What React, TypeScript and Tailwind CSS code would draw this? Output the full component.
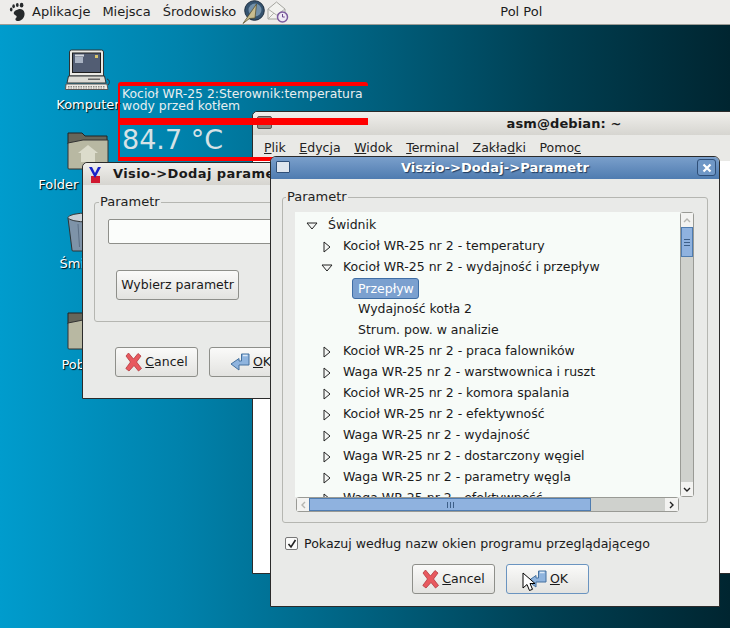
import React from "react";

const FONT = { fontFamily: '"DejaVu Sans", sans-serif' };

const TREE = [
  { label: "Kocioł WR-25 nr 2 - temperatury", open: false, lvl: 1 },
  { label: "Kocioł WR-25 nr 2 - wydajność i przepływ", open: true, lvl: 1 },
  { label: "Przepływ", lvl: 2, selected: true },
  { label: "Wydajność kotła 2", lvl: 2 },
  { label: "Strum. pow. w analizie", lvl: 2 },
  { label: "Kocioł WR-25 nr 2 - praca falowników", open: false, lvl: 1 },
  { label: "Waga WR-25 nr 2 - warstwownica i ruszt", open: false, lvl: 1 },
  { label: "Kocioł WR-25 nr 2 - komora spalania", open: false, lvl: 1 },
  { label: "Kocioł WR-25 nr 2 - efektywność", open: false, lvl: 1 },
  { label: "Waga WR-25 nr 2 - wydajność", open: false, lvl: 1 },
  { label: "Waga WR-25 nr 2 - dostarczony węgiel", open: false, lvl: 1 },
  { label: "Waga WR-25 nr 2 - parametry węgla", open: false, lvl: 1 },
  { label: "Waga WR-25 nr 2 - efektywność", open: false, lvl: 1 },
];

function Foot() {
  return (
    <svg width="17" height="20" viewBox="0 0 17 20">
      <path d="M9 7.500c3-1.200 6 .5 6.500 3.500.5 3.500-2 7.500-6 8-2.500.3-4-1.500-2.500-3 1.200-1.200 1-2-1-3-2.500-1.500-1-4.500 3-5.500z" fill="#26292b" />
      <ellipse cx="2.200" cy="7.500" rx="1.300" ry="1.900" fill="#26292b" />
      <ellipse cx="4.600" cy="4.300" rx="1.300" ry="2" fill="#26292b" />
      <ellipse cx="8.300" cy="3" rx="1.400" ry="2" fill="#26292b" />
      <ellipse cx="12.600" cy="3.200" rx="1.800" ry="2.400" fill="#26292b" />
    </svg>
  );
}

function Compass() {
  return (
    <svg width="23" height="24" viewBox="0 0 23 24">
      <circle cx="12.500" cy="10.500" r="9.800" fill="#35536f" stroke="#1f2f40" />
      <circle cx="13" cy="10" r="6.500" fill="#88a5bd" opacity=".75" />
      <path d="M1 23.500 14.500 4l-1.500 14-5.500.5z" fill="#c9bd8f" stroke="#4f4727" strokeWidth=".7" />
    </svg>
  );
}

function MailClock() {
  return (
    <svg width="22" height="23" viewBox="0 0 22 23">
      <path d="M1 8 9.500 1 18 8v10H1z" fill="#f2f2ef" stroke="#a5a5a0" />
      <path d="M1 8l8.500 6L18 8M1 18l6-6" fill="none" stroke="#b0b0ab" />
      <circle cx="15.500" cy="16" r="5" fill="#efe9f4" stroke="#7b5a9e" strokeWidth="1.500" />
      <path d="M15.500 13v3h2.200" stroke="#6b4a8e" fill="none" />
    </svg>
  );
}

function ComputerIcon() {
  return (
    <svg width="46" height="42" viewBox="0 0 46 42">
      <path d="M6.500 1h30a2 2 0 0 1 2 2v24h-34V3a2 2 0 0 1 2-2z" fill="#ebeae5" stroke="#2e3436" />
      <rect x="7.500" y="4" width="28" height="19.500" fill="#525d73" stroke="#1c1c1c" />
      <rect x="10" y="5.500" width="9" height="2" fill="#d6dae0" />
      <rect x="10" y="8" width="8" height="6" fill="#a9b3c3" />
      <rect x="30" y="6" width="3" height="3" fill="#d8c56a" />
      <path d="M3.500 27h36l1.500 7H2z" fill="#dcdbd4" stroke="#2e3436" />
      <rect x="23" y="29.500" width="12" height="1.500" fill="#666" />
      <path d="M1 35h41l1 5.500H.5z" fill="#ecebe5" stroke="#555" />
      <path d="M3 37.500h37M3 39h37" stroke="#8a8a86" strokeDasharray="1.500 1" />
      <path d="M42 30c3 1 3 4 1 6" fill="none" stroke="#333" />
    </svg>
  );
}

function FolderIcon({ home }: { home?: boolean }) {
  return (
    <svg width="42" height="38" viewBox="0 0 42 38">
      <path d="M1 1h14l3 3h22v8H1z" fill="#66665a" stroke="#222" />
      <path d="M1 11 16 8h25v28a1 1 0 0 1-1 1H2a1 1 0 0 1-1-1z" fill="#b8b8a2" stroke="#333" />
      {home && <path d="M21 13l-10 8h3v9h14v-9h3z" fill="#dcdccb" />}
    </svg>
  );
}

function TrashIcon() {
  return (
    <svg width="44" height="40" viewBox="0 0 44 40">
      <path d="M2 6h40l-4 32a1 1 0 0 1-1 1H7a1 1 0 0 1-1-1z" fill="#7e93a8" stroke="#2e3436" />
      <ellipse cx="22" cy="5.500" rx="20" ry="4.500" fill="#c9d0d6" stroke="#2e3436" />
      <path d="M12 12l1.500 23M22 12v23M32 12l-1.500 23" stroke="#5c7086" />
    </svg>
  );
}

function CancelIcon() {
  return (
    <svg width="17" height="20" viewBox="0 0 17 20">
      <path d="M3.500 1 8.500 7 13 1.500l3 2.500-4.500 6 5 6.500-3 2.500-4.500-5.500L4 19 .8 16.500 5.500 10 1 4z" fill="#e8595f" stroke="#b23a3f" strokeWidth=".8" strokeLinejoin="round" />
    </svg>
  );
}

function OkIcon() {
  return (
    <svg width="20" height="19" viewBox="0 0 20 19">
      <path d="M11.500 1H19v11H9v5L1 11l8-5.500V8h2.500z" fill="#8fb4de" stroke="#44719f" strokeLinejoin="round" />
      <path d="M13 2.500h4.500" stroke="#dbe8f6" strokeWidth="1.500" />
    </svg>
  );
}

function Btn({ children, focus }: { children: React.ReactNode; focus?: boolean }) {
  return (
    <div className={`flex h-[30px] w-[83px] items-center justify-center gap-[3px] rounded-[3px] border bg-gradient-to-b from-[#fafaf9] to-[#e3e3e0] text-[12.5px] text-[#1a1a1a] ${focus ? "border-[#6a94c0]" : "border-[#8e8f8a]"}`}>
      {children}
    </div>
  );
}

function CancelBtn() {
  return (
    <Btn>
      <CancelIcon />
      <span><span className="underline">C</span>ancel</span>
    </Btn>
  );
}

function OkBtn({ focus }: { focus?: boolean }) {
  return (
    <Btn focus={focus}>
      <OkIcon />
      <span><span className="underline">O</span>K</span>
    </Btn>
  );
}

function Desk({ label, children, cls, gap }: { label: string; children: React.ReactNode; cls: string; gap: string }) {
  return (
    <div className={`absolute flex w-[100px] flex-col items-center text-[13px] text-white ${cls}`}>
      {children}
      <span className={`whitespace-nowrap [text-shadow:1px_1px_1px_#000] ${gap}`}>{label}</span>
    </div>
  );
}

function Arrow({ open }: { open?: boolean }) {
  return open ? (
    <svg width="12" height="8" viewBox="0 0 12 8"><path d="M1 1h10L6 7z" fill="#f4f6f4" stroke="#222" /></svg>
  ) : (
    <svg width="8" height="12" viewBox="0 0 8 12"><path d="M1 1v10l6-5z" fill="#f4f6f4" stroke="#222" /></svg>
  );
}

export default function App() {
  return (
    <div style={FONT} className="relative h-[628px] w-[730px] overflow-hidden bg-[linear-gradient(90deg,#009ccd_0px,#0082ac_180px,#00607e_370px,#003f52_550px,#002530_730px)]">
      {/* top panel */}
      <div className="flex h-[25px] items-center border-b border-[#9c9c96] bg-[#edecea] text-[13px] text-[#1c1c1c]">
        <div className="ml-[9px] flex w-[23px] items-center"><Foot /></div>
        <span>Aplikacje</span>
        <span className="ml-[12px]">Miejsca</span>
        <span className="ml-[12px]">Środowisko</span>
        <div className="ml-[6px]"><Compass /></div>
        <div className="ml-[2px]"><MailClock /></div>
        <span className="ml-[211px]">Pol Pol</span>
      </div>

      {/* desktop icons */}
      <Desk label="Komputer" cls="left-[38px] top-[49px]" gap="mt-[4px]"><ComputerIcon /></Desk>
      <Desk label="Folder domowy" cls="left-[38px] top-[132px]" gap="mt-[5px]"><FolderIcon home /></Desk>
      <Desk label="Śmietnik" cls="left-[38px] top-[212px]" gap="mt-[2px]"><TrashIcon /></Desk>
      <Desk label="Pobrane" cls="left-[38px] top-[312px]" gap="mt-[5px]"><FolderIcon /></Desk>

      {/* terminal window */}
      <div className="absolute left-[252px] top-[111px] h-[463px] w-[624px] rounded-t-[5px] border border-[#2b2b2b] bg-white">
        <div className="flex h-[23px] items-center justify-center rounded-t-[5px] bg-gradient-to-b from-[#f0efec] to-[#d6d5d0] text-[13px] font-bold tracking-[0.1px] text-[#1a1a1a]">
          asm@debian: ~
        </div>
        <div className="flex h-[26px] items-center gap-[13.6px] bg-[#e9e9e6] pl-[11px] text-[12.5px] text-[#222]">
          <span><span className="underline">P</span>lik</span>
          <span><span className="underline">E</span>dycja</span>
          <span><span className="underline">W</span>idok</span>
          <span><span className="underline">T</span>erminal</span>
          <span>Zakła<span className="underline">d</span>ki</span>
          <span>Pomo<span className="underline">c</span></span>
        </div>
      </div>
      <div className="absolute left-[257px] top-[116px] h-[13px] w-[15px] rounded-[2px] border border-[#555] bg-[#8a8a84]" />

      {/* red widget */}
      <div className="absolute left-[118px] top-[82px] h-[79px] w-[250px] rounded-t-[3px] border-y-4 border-l-2 border-[#ff0000]">
        <div className="h-[32px] px-[2px] pt-[2px] text-[12.4px] leading-[12px] text-[#e8eef0]">
          Kocioł WR-25 2:Sterownik:temperatura
          <br />
          wody przed kotłem
        </div>
        <div className="h-[7px] bg-[#ff0000]" />
        <div className="pl-[2px] text-[27px] leading-[30px] text-[#d6e2e6]">84.7 °C</div>
      </div>

      {/* Visio dialog */}
      <div className="absolute left-[82px] top-[162px] h-[237px] w-[230px] rounded-t-[5px] border border-[#2b2b2b] bg-[#e9eae8]">
        <div className="flex h-[22px] items-center whitespace-nowrap rounded-t-[5px] bg-gradient-to-b from-[#f0efec] to-[#d6d5d0] pl-[5px] text-[13px] font-bold tracking-[0.4px] text-[#1a1a1a]">
          <svg width="16" height="17" viewBox="0 0 16 17" className="mr-[9px]">
            <rect x="3" y="10" width="9" height="7" fill="#d01830" />
            <path d="M1 1l6 11 6-11-3 0-3 6-3-6z" fill="#1a22c8" />
          </svg>
          Visio-&gt;Dodaj parametr
        </div>
        <div className="relative ml-[11px] mt-[17px] h-[120px] w-[230px] rounded-[3px] border border-[#b5b6b1] pl-[13px] pt-[16px]">
          <span className="absolute -top-[9px] left-[4px] bg-[#e9eae8] px-[1px] text-[13px] leading-[16px] text-[#222]">Parametr</span>
          <div className="h-[25px] w-[200px] rounded-[2px] border border-[#8e8f8a] bg-[#fbfdfb]" />
          <div className="ml-[8px] mt-[26px] flex h-[30px] w-[123px] items-center justify-center rounded-[3px] border border-[#8e8f8a] bg-gradient-to-b from-[#fafaf9] to-[#e3e3e0] text-[12.5px] text-[#1a1a1a]">Wybierz parametr</div>
        </div>
        <div className="ml-[32px] mt-[25px] flex gap-[11px]">
          <CancelBtn />
          <OkBtn />
        </div>
      </div>

      {/* parameter dialog */}
      <div className="absolute left-[270px] top-[156px] flex h-[451px] w-[450px] flex-col rounded-t-[6px] border border-[#2b2b2b] bg-[#e9eae8]">
        <div className="relative flex h-[22px] shrink-0 items-center justify-center rounded-t-[5px] bg-gradient-to-b from-[#7a9fcb] to-[#4f7cb0] text-[13px] font-bold tracking-[0.1px] text-white [text-shadow:1px_1px_1px_#1f3a5c]">
          Viszio-&gt;Dodaj-&gt;Parametr
          <div className="absolute left-[5px] top-[4px] h-[12px] w-[14px] rounded-[1px] border border-[#2f4f78] bg-[#dfe6ee]" />
          <div className="absolute right-[3px] top-[2px] flex h-[17px] w-[19px] items-center justify-center rounded-[3px] border border-[#2f4f78] bg-[#6f97c6]">
            <svg width="10" height="10" viewBox="0 0 10 10"><path d="M1.500 1.500l7 7M8.500 1.500l-7 7" stroke="#fff" strokeWidth="2.200" /></svg>
          </div>
        </div>

        <div className="relative mx-[11px] mt-[18px] h-[326px] shrink-0 rounded-[3px] border border-[#b5b6b1] pl-[12px] pt-[14px]">
          <span className="absolute -top-[9px] left-[3px] bg-[#e9eae8] px-[1px] text-[13px] leading-[16px] text-[#222]">Parametr</span>
          <div className="flex h-[285px]">
            <div className="h-[285px] w-[385px] overflow-hidden bg-[#f7fbf8] pt-[3px] text-[12.5px] text-[#1a1a1a]">
              <div className="flex h-[21px] items-center pl-[11px]">
                <Arrow open />
                <span className="ml-[10px]">Świdnik</span>
              </div>
              {TREE.map((n) => (
                <div key={n.label} className="flex h-[21px] items-center whitespace-nowrap">
                  {n.lvl === 1 ? (
                    <>
                      <div className={`flex w-[48px] justify-end ${n.open ? "pr-[10px]" : "pr-[12px]"}`}><Arrow open={n.open} /></div>
                      <span>{n.label}</span>
                    </>
                  ) : n.selected ? (
                    <span className="ml-[57px] rounded-[3px] border border-[#3f6ea5] bg-[#7ba0cf] pl-[5px] pr-[4px] leading-[19px] text-white">{n.label}</span>
                  ) : (
                    <span className="ml-[63px]">{n.label}</span>
                  )}
                </div>
              ))}
            </div>
            {/* vertical scrollbar */}
            <div className="flex w-[14px] flex-col rounded-[3px] border border-[#999a95] bg-[#cfd1cd]">
              <div className="flex h-[14px] items-center justify-center bg-[#f3f3f1]">
                <svg width="8" height="5" viewBox="0 0 8 5"><path d="M1 4l3-3 3 3" fill="none" stroke="#b5b5b0" strokeWidth="1.400" /></svg>
              </div>
              <div className="flex h-[30px] flex-col items-center justify-center gap-[2px] border border-[#4f7cb0] bg-[#8fb2df]">
                <div className="h-px w-[6px] bg-[#3d5f88]" /><div className="h-px w-[6px] bg-[#3d5f88]" /><div className="h-px w-[6px] bg-[#3d5f88]" />
              </div>
              <div className="flex-1" />
              <div className="flex h-[14px] items-center justify-center bg-[#f3f3f1]">
                <svg width="8" height="5" viewBox="0 0 8 5"><path d="M1 1l3 3 3-3" fill="none" stroke="#222" strokeWidth="1.400" /></svg>
              </div>
            </div>
          </div>
          {/* horizontal scrollbar */}
          <div className="absolute left-[13px] top-[299px] flex h-[15px] w-[383px] rounded-[3px] border border-[#999a95] bg-[#cfd1cd]">
            <div className="flex w-[12px] items-center justify-center bg-[#f3f3f1]">
              <svg width="5" height="8" viewBox="0 0 5 8"><path d="M4 1 1 4l3 3" fill="none" stroke="#b5b5b0" strokeWidth="1.400" /></svg>
            </div>
            <div className="flex w-[282px] items-center justify-center gap-[2px] border border-[#4f7cb0] bg-[#8fb2df]">
              <div className="h-[6px] w-px bg-[#3d5f88]" /><div className="h-[6px] w-px bg-[#3d5f88]" /><div className="h-[6px] w-px bg-[#3d5f88]" />
            </div>
            <div className="flex-1" />
            <div className="flex w-[13px] items-center justify-center bg-[#f3f3f1]">
              <svg width="5" height="8" viewBox="0 0 5 8"><path d="M1 1l3 3-3 3" fill="none" stroke="#222" strokeWidth="1.400" /></svg>
            </div>
          </div>
        </div>

        <div className="ml-[14px] mt-[11px] flex items-center text-[12.6px] leading-[19px] text-[#1a1a1a]">
          <div className="flex h-[13px] w-[13px] items-center justify-center rounded-[2px] border border-[#777] bg-[#fbfbfa]">
            <svg width="10" height="10" viewBox="0 0 10 10"><path d="M1.500 5l2.500 3 4.500-7" fill="none" stroke="#222" strokeWidth="1.600" /></svg>
          </div>
          <span className="ml-[6px]">Pokazuj według nazw okien programu przeglądającego</span>
        </div>

        <div className="ml-[141px] mt-[11px] flex gap-[11px]">
          <CancelBtn />
          <OkBtn focus />
        </div>
      </div>

      {/* mouse pointer */}
      <svg width="14" height="20" viewBox="0 0 14 20" className="absolute left-[522px] top-[572px]">
        <path d="M1 1v15l4-3.500 2.500 6 3-1.200-2.500-5.800h5z" fill="#fff" stroke="#000" />
      </svg>
    </div>
  );
}
